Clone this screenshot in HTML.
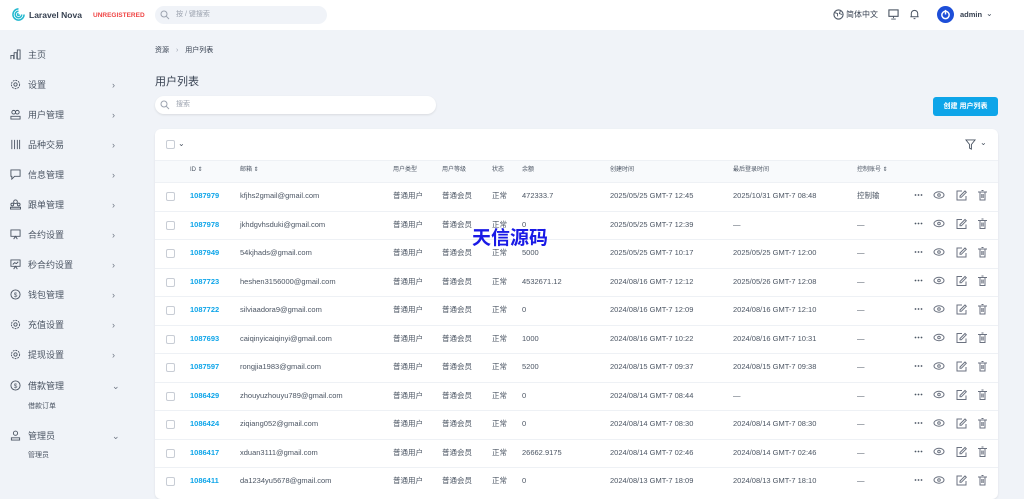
<!DOCTYPE html>
<html><head><meta charset="utf-8">
<style>
*{margin:0;padding:0;box-sizing:border-box}
body{width:1024px;height:492px;overflow:hidden;background:#f0f3f8;font-family:"Liberation Sans","Noto Sans CJK SC",sans-serif;color:#4b5563;position:relative}
.a{position:absolute;white-space:nowrap}
.top{position:absolute;left:0;top:0;width:1024px;height:30px;background:#fff}
.side .it{position:absolute;left:10px;width:120px;font-size:9px;color:#4b5563;height:14px;line-height:14px;white-space:nowrap}
.side .it svg{position:absolute;left:0;top:1px}
.side .it span{position:absolute;left:18px;top:0;white-space:nowrap}
.chev{position:absolute;left:102px;top:0;font-size:9px;color:#6b7280;font-weight:normal}
.card{position:absolute;left:155px;top:129px;width:843px;height:370px;background:#fff;border-radius:6px;box-shadow:0 1px 2px rgba(0,0,0,.08)}
.th{position:absolute;left:155px;top:160px;width:843px;height:22px;background:#f8fafc;border-top:1px solid #eef1f5}
.row{position:absolute;left:155px;width:843px;height:28.5px;border-top:1px solid #eef1f5;font-size:7.5px;color:#4b5563}
.row .a{top:8px;line-height:10px}
.cb{position:absolute;left:11px;top:9px;width:9px;height:9px;border:1px solid #c8cdd5;border-radius:2px;background:#fff}
.id{color:#0ea5e9;font-weight:bold}
.h{font-size:6px;color:#4b5563;top:166px;line-height:8px}
</style></head><body>
<div class="top"></div>
<svg class="a" style="left:12px;top:8px" width="13" height="13" viewBox="0 0 14 14"><path d="M7 1a6 6 0 1 0 6 6M7 3.5a3.5 3.5 0 1 0 3.5 3.5M7 6a1 1 0 1 0 1 1" fill="none" stroke="#22b8cf" stroke-width="1.6"/></svg>
<div class="a" style="left:29px;top:10px;font-size:8.5px;color:#374151;font-weight:bold">Laravel Nova</div>
<div class="a" style="left:93px;top:12px;font-size:6.5px;color:#ef4444;font-weight:bold">UNREGISTERED</div>
<div class="a" style="left:155px;top:6px;width:172px;height:18px;background:#f0f3f8;border-radius:9px"></div>
<svg class="a" style="left:160px;top:10px" width="10" height="10" viewBox="0 0 10 10"><circle cx="4" cy="4" r="3" fill="none" stroke="#9ca3af" stroke-width="1"/><path d="M6.3 6.3L9 9" stroke="#9ca3af"/></svg>
<div class="a" style="left:176px;top:10px;font-size:7px;color:#9ca3af;line-height:10px">按 / 键搜索</div>
<svg class="a" style="left:833px;top:9px" width="11" height="11" viewBox="0 0 12 12"><circle cx="6" cy="6" r="5" fill="none" stroke="#4b5563" stroke-width="1.2"/><path d="M2 4l3 1v3M8 2l-1 3 3 1" fill="none" stroke="#4b5563"/></svg>
<div class="a" style="left:846px;top:9px;font-size:8px;color:#374151;line-height:11px">简体中文</div>
<svg class="a" style="left:888px;top:9px" width="11" height="11" viewBox="0 0 12 12"><rect x="1" y="1" width="10" height="7" fill="none" stroke="#4b5563" stroke-width="1.2"/><path d="M6 8v2M3.5 11h5" stroke="#4b5563"/></svg>
<svg class="a" style="left:909px;top:8px" width="11" height="12" viewBox="0 0 12 12"><path d="M2.5 9V5.5a3.5 3.5 0 0 1 7 0V9H2.5zM1.5 9h9M5 11h2" fill="none" stroke="#4b5563" stroke-width="1.1"/></svg>
<div class="a" style="left:937px;top:6px;width:17px;height:17px;border-radius:50%;background:#1d4ed8"></div>
<svg class="a" style="left:940px;top:9px" width="11" height="11" viewBox="0 0 12 12"><circle cx="6" cy="6.5" r="4" fill="none" stroke="#fff" stroke-width="1.6"/><path d="M6 1v5" stroke="#fff" stroke-width="1.6"/></svg>
<div class="a" style="left:960px;top:10px;font-size:7.5px;color:#374151;font-weight:bold">admin</div>
<div class="a" style="left:986px;top:9px;font-size:8px;color:#4b5563">⌄</div>

<div class="side">
<div class="it" style="top:48px"><svg width="11" height="11" viewBox="0 0 12 12"><path d="M1 11V7h3v4M4.5 11V4h3v7M8 11V1h3v10z" fill="none" stroke="#4b5563"/></svg><span>主页</span></div>
<div class="it" style="top:78px"><svg width="11" height="11" viewBox="0 0 12 12"><circle cx="6" cy="6" r="4.5" fill="none" stroke="#4b5563" stroke-dasharray="2 1"/><circle cx="6" cy="6" r="1.8" fill="none" stroke="#4b5563"/></svg><span>设置</span><b class="chev">›</b></div>
<div class="it" style="top:108px"><svg width="11" height="11" viewBox="0 0 12 12"><circle cx="4" cy="3.5" r="2" fill="none" stroke="#4b5563"/><circle cx="8" cy="3.5" r="2" fill="none" stroke="#4b5563"/><path d="M1 11V8h10v3z" fill="none" stroke="#4b5563"/></svg><span>用户管理</span><b class="chev">›</b></div>
<div class="it" style="top:138px"><svg width="11" height="11" viewBox="0 0 12 12"><path d="M2 1v10M5 1v10M8 1v10M10.5 1v10" stroke="#4b5563"/></svg><span>品种交易</span><b class="chev">›</b></div>
<div class="it" style="top:168px"><svg width="11" height="11" viewBox="0 0 12 12"><path d="M1 1h10v7H5l-3 3V8H1z" fill="none" stroke="#4b5563"/></svg><span>信息管理</span><b class="chev">›</b></div>
<div class="it" style="top:198px"><svg width="11" height="11" viewBox="0 0 12 12"><circle cx="6" cy="3" r="2" fill="none" stroke="#4b5563"/><circle cx="2.5" cy="6" r="1.5" fill="none" stroke="#4b5563"/><circle cx="9.5" cy="6" r="1.5" fill="none" stroke="#4b5563"/><path d="M0.5 11h11V9H.5z" fill="none" stroke="#4b5563"/></svg><span>跟单管理</span><b class="chev">›</b></div>
<div class="it" style="top:228px"><svg width="11" height="11" viewBox="0 0 12 12"><path d="M1 1h10v7H1zM4 11l2-3 2 3" fill="none" stroke="#4b5563"/></svg><span>合约设置</span><b class="chev">›</b></div>
<div class="it" style="top:258px"><svg width="11" height="11" viewBox="0 0 12 12"><path d="M1 1h10v7H1zM4 11l2-3 2 3M3 6l2-2 2 1 2-2" fill="none" stroke="#4b5563"/></svg><span>秒合约设置</span><b class="chev">›</b></div>
<div class="it" style="top:288px"><svg width="11" height="11" viewBox="0 0 12 12"><circle cx="6" cy="6" r="5" fill="none" stroke="#4b5563"/><text x="6" y="8.5" font-size="7" text-anchor="middle" fill="#4b5563">$</text></svg><span>钱包管理</span><b class="chev">›</b></div>
<div class="it" style="top:318px"><svg width="11" height="11" viewBox="0 0 12 12"><circle cx="6" cy="6" r="4.5" fill="none" stroke="#4b5563" stroke-dasharray="2 1"/><circle cx="6" cy="6" r="1.8" fill="none" stroke="#4b5563"/></svg><span>充值设置</span><b class="chev">›</b></div>
<div class="it" style="top:348px"><svg width="11" height="11" viewBox="0 0 12 12"><circle cx="6" cy="6" r="4.5" fill="none" stroke="#4b5563" stroke-dasharray="2 1"/><circle cx="6" cy="6" r="1.8" fill="none" stroke="#4b5563"/></svg><span>提现设置</span><b class="chev">›</b></div>
<div class="it" style="top:379px"><svg width="11" height="11" viewBox="0 0 12 12"><circle cx="6" cy="6" r="5" fill="none" stroke="#4b5563"/><text x="6" y="8.5" font-size="7" text-anchor="middle" fill="#4b5563">$</text></svg><span>借款管理</span><b class="chev">⌄</b></div>
<div class="a" style="left:28px;top:401px;font-size:7px;color:#4b5563">借款订单</div>
<div class="it" style="top:429px"><svg width="11" height="11" viewBox="0 0 12 12"><circle cx="6" cy="3.5" r="2.3" fill="none" stroke="#4b5563"/><path d="M1.5 11V8.5h9V11z" fill="none" stroke="#4b5563"/></svg><span>管理员</span><b class="chev">⌄</b></div>
<div class="a" style="left:28px;top:450px;font-size:7px;color:#4b5563">管理员</div>
</div>

<div class="a" style="left:155px;top:46px;font-size:7px;color:#374151;line-height:10px">资源 <span style="color:#9ca3af;margin:0 5px">›</span> 用户列表</div>
<div class="a" style="left:155px;top:75px;font-size:11px;color:#374151;line-height:14px">用户列表</div>
<div class="a" style="left:155px;top:96px;width:281px;height:18px;background:#fff;border-radius:9px;box-shadow:0 1px 2px rgba(0,0,0,.1)"></div>
<svg class="a" style="left:160px;top:100px" width="10" height="10" viewBox="0 0 10 10"><circle cx="4" cy="4" r="3" fill="none" stroke="#9ca3af"/><path d="M6.3 6.3L9 9" stroke="#9ca3af"/></svg>
<div class="a" style="left:176px;top:100px;font-size:7px;color:#9ca3af;line-height:10px">搜索</div>
<div class="a" style="left:933px;top:97px;width:65px;height:19px;background:#0ea5e9;border-radius:3px;color:#fff;font-size:7px;font-weight:bold;text-align:center;line-height:19px">创建 用户列表</div>

<div class="card"></div>
<div class="a" style="left:166px;top:140px;width:9px;height:9px;border:1px solid #c8cdd5;border-radius:2px"></div>
<div class="a" style="left:178px;top:139px;font-size:8px;color:#4b5563">⌄</div>
<svg class="a" style="left:965px;top:139px" width="11" height="11" viewBox="0 0 12 12"><path d="M1 1h10L7 6v5L5 10V6z" fill="none" stroke="#4b5563"/></svg>
<div class="a" style="left:980px;top:138px;font-size:8px;color:#4b5563">⌄</div>
<div class="th"></div>
<div class="a h" style="left:190px">ID ⇕</div>
<div class="a h" style="left:240px">邮箱 ⇕</div>
<div class="a h" style="left:393px">用户类型</div>
<div class="a h" style="left:442px">用户等级</div>
<div class="a h" style="left:492px">状态</div>
<div class="a h" style="left:522px">余额</div>
<div class="a h" style="left:610px">创建时间</div>
<div class="a h" style="left:733px">最后登录时间</div>
<div class="a h" style="left:857px">控制账号 ⇕</div>

<div id="rows">
<div class="row" style="top:182px"><i class="cb"></i><span class="a id" style="left:35px">1087979</span><span class="a" style="left:85px">kfjhs2gmail@gmail.com</span><span class="a" style="left:238px">普通用户</span><span class="a" style="left:287px">普通会员</span><span class="a" style="left:337px">正常</span><span class="a" style="left:367px">472333.7</span><span class="a" style="left:455px">2025/05/25 GMT-7 12:45</span><span class="a" style="left:578px">2025/10/31 GMT-7 08:48</span><span class="a" style="left:702px">控制输</span></div>
<div class="row" style="top:210.5px"><i class="cb"></i><span class="a id" style="left:35px">1087978</span><span class="a" style="left:85px">jkhdgvhsduki@gmail.com</span><span class="a" style="left:238px">普通用户</span><span class="a" style="left:287px">普通会员</span><span class="a" style="left:337px">正常</span><span class="a" style="left:367px">0</span><span class="a" style="left:455px">2025/05/25 GMT-7 12:39</span><span class="a" style="left:578px">—</span><span class="a" style="left:702px">—</span></div>
<div class="row" style="top:239px"><i class="cb"></i><span class="a id" style="left:35px">1087949</span><span class="a" style="left:85px">54kjhads@gmail.com</span><span class="a" style="left:238px">普通用户</span><span class="a" style="left:287px">普通会员</span><span class="a" style="left:337px">正常</span><span class="a" style="left:367px">5000</span><span class="a" style="left:455px">2025/05/25 GMT-7 10:17</span><span class="a" style="left:578px">2025/05/25 GMT-7 12:00</span><span class="a" style="left:702px">—</span></div>
<div class="row" style="top:267.5px"><i class="cb"></i><span class="a id" style="left:35px">1087723</span><span class="a" style="left:85px">heshen3156000@gmail.com</span><span class="a" style="left:238px">普通用户</span><span class="a" style="left:287px">普通会员</span><span class="a" style="left:337px">正常</span><span class="a" style="left:367px">4532671.12</span><span class="a" style="left:455px">2024/08/16 GMT-7 12:12</span><span class="a" style="left:578px">2025/05/26 GMT-7 12:08</span><span class="a" style="left:702px">—</span></div>
<div class="row" style="top:296px"><i class="cb"></i><span class="a id" style="left:35px">1087722</span><span class="a" style="left:85px">silviaadora9@gmail.com</span><span class="a" style="left:238px">普通用户</span><span class="a" style="left:287px">普通会员</span><span class="a" style="left:337px">正常</span><span class="a" style="left:367px">0</span><span class="a" style="left:455px">2024/08/16 GMT-7 12:09</span><span class="a" style="left:578px">2024/08/16 GMT-7 12:10</span><span class="a" style="left:702px">—</span></div>
<div class="row" style="top:324.5px"><i class="cb"></i><span class="a id" style="left:35px">1087693</span><span class="a" style="left:85px">caiqinyicaiqinyi@gmail.com</span><span class="a" style="left:238px">普通用户</span><span class="a" style="left:287px">普通会员</span><span class="a" style="left:337px">正常</span><span class="a" style="left:367px">1000</span><span class="a" style="left:455px">2024/08/16 GMT-7 10:22</span><span class="a" style="left:578px">2024/08/16 GMT-7 10:31</span><span class="a" style="left:702px">—</span></div>
<div class="row" style="top:353px"><i class="cb"></i><span class="a id" style="left:35px">1087597</span><span class="a" style="left:85px">rongjia1983@gmail.com</span><span class="a" style="left:238px">普通用户</span><span class="a" style="left:287px">普通会员</span><span class="a" style="left:337px">正常</span><span class="a" style="left:367px">5200</span><span class="a" style="left:455px">2024/08/15 GMT-7 09:37</span><span class="a" style="left:578px">2024/08/15 GMT-7 09:38</span><span class="a" style="left:702px">—</span></div>
<div class="row" style="top:381.5px"><i class="cb"></i><span class="a id" style="left:35px">1086429</span><span class="a" style="left:85px">zhouyuzhouyu789@gmail.com</span><span class="a" style="left:238px">普通用户</span><span class="a" style="left:287px">普通会员</span><span class="a" style="left:337px">正常</span><span class="a" style="left:367px">0</span><span class="a" style="left:455px">2024/08/14 GMT-7 08:44</span><span class="a" style="left:578px">—</span><span class="a" style="left:702px">—</span></div>
<div class="row" style="top:410px"><i class="cb"></i><span class="a id" style="left:35px">1086424</span><span class="a" style="left:85px">ziqiang052@gmail.com</span><span class="a" style="left:238px">普通用户</span><span class="a" style="left:287px">普通会员</span><span class="a" style="left:337px">正常</span><span class="a" style="left:367px">0</span><span class="a" style="left:455px">2024/08/14 GMT-7 08:30</span><span class="a" style="left:578px">2024/08/14 GMT-7 08:30</span><span class="a" style="left:702px">—</span></div>
<div class="row" style="top:438.5px"><i class="cb"></i><span class="a id" style="left:35px">1086417</span><span class="a" style="left:85px">xduan3111@gmail.com</span><span class="a" style="left:238px">普通用户</span><span class="a" style="left:287px">普通会员</span><span class="a" style="left:337px">正常</span><span class="a" style="left:367px">26662.9175</span><span class="a" style="left:455px">2024/08/14 GMT-7 02:46</span><span class="a" style="left:578px">2024/08/14 GMT-7 02:46</span><span class="a" style="left:702px">—</span></div>
<div class="row" style="top:467px"><i class="cb"></i><span class="a id" style="left:35px">1086411</span><span class="a" style="left:85px">da1234yu5678@gmail.com</span><span class="a" style="left:238px">普通用户</span><span class="a" style="left:287px">普通会员</span><span class="a" style="left:337px">正常</span><span class="a" style="left:367px">0</span><span class="a" style="left:455px">2024/08/13 GMT-7 18:09</span><span class="a" style="left:578px">2024/08/13 GMT-7 18:10</span><span class="a" style="left:702px">—</span></div>
</div>

<svg class="a" style="left:910px;top:182px" width="80" height="310" viewBox="0 0 80 310">
<defs><g id="ac">
<circle cx="5.5" cy="0" r="0.9" fill="#4b5563"/><circle cx="8.5" cy="0" r="0.9" fill="#4b5563"/><circle cx="11.5" cy="0" r="0.9" fill="#4b5563"/>
<ellipse cx="29" cy="0" rx="5" ry="3.2" fill="none" stroke="#6b7280" stroke-width="1"/><circle cx="29" cy="0" r="1.3" fill="none" stroke="#6b7280"/>
<path d="M52 -4H47v9h9v-4M50 1l5-5 1.3 1.3-5 5H50z" fill="none" stroke="#6b7280" stroke-width="1"/>
<path d="M68 -3h9M70 -3v8h5v-8M71.5 -4.5h2M71.8 -1v4M73.2 -1v4" fill="none" stroke="#6b7280" stroke-width="1"/>
</g></defs>
<use href="#ac" y="13"/><use href="#ac" y="41.5"/><use href="#ac" y="70"/><use href="#ac" y="98.5"/><use href="#ac" y="127"/><use href="#ac" y="155.5"/><use href="#ac" y="184"/><use href="#ac" y="212.5"/><use href="#ac" y="241"/><use href="#ac" y="269.5"/><use href="#ac" y="298"/>
</svg>

<div class="a" style="left:472px;top:227px;font-size:19px;font-weight:bold;color:#1a1ae6;line-height:24px">天信源码</div>
</body></html>
